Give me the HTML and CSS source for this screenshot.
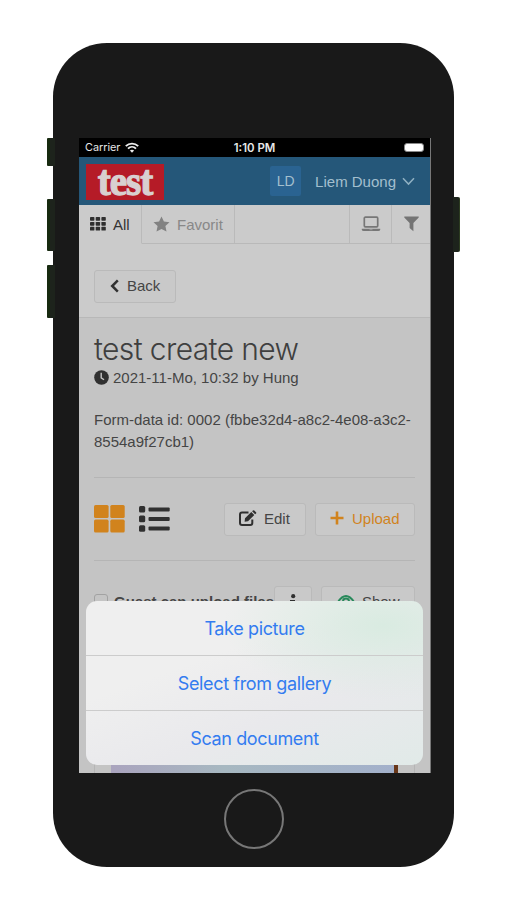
FILE: index.html
```html
<!DOCTYPE html>
<html lang="en">
<head>
    <meta charset="UTF-8">
    <meta name="viewport" content="width=device-width, initial-scale=1.0">
    <title>test create new</title>
    <link rel="stylesheet" href="styles.css">
</head>
<body>
    <div class="phone">
        <!-- Hardware buttons -->
        <span class="key mute"></span>
        <span class="key volume-up"></span>
        <span class="key volume-down"></span>
        <span class="key power"></span>

        <div class="screen">
            <div class="status-bar">
                <div class="carrier">
                    <span>Carrier</span>
                    <svg width="14" height="11" viewBox="0 0 14 11" fill="none" stroke="#eee" stroke-width="1.9">
                        <path d="M.8 4.2C4.3.7 9.7.7 13.2 4.2M3 6.6c2.3-2.3 5.7-2.3 8 0"/>
                        <path d="M7 10.8 4.9 8.6c1.2-1.1 3-1.1 4.2 0z" fill="#eee" stroke="none"/>
                    </svg>
                </div>
                <span class="time">1:10 PM</span>
                <span class="battery"></span>
            </div>

            <header class="header">
                <div class="logo"><span>test</span></div>
                <div class="avatar">LD</div>
                <span class="user">Liem Duong</span>
                <svg width="13" height="9" viewBox="0 0 13 9" fill="none" stroke="#8fb0c2" stroke-width="1.5"><path d="m1 1.3 5.5 5.8L12 1.3"/></svg>
            </header>

            <nav class="tabs">
                <div class="tab active">
                    <svg width="16" height="14" viewBox="0 0 16 14" fill="#2f2f2f">
                        <rect width="4.4" height="3.8" rx=".7"/><rect x="5.7" width="4.4" height="3.8" rx=".7"/><rect x="11.4" width="4.4" height="3.8" rx=".7"/>
                        <rect y="4.9" width="4.4" height="3.8" rx=".7"/><rect x="5.7" y="4.9" width="4.4" height="3.8" rx=".7"/><rect x="11.4" y="4.9" width="4.4" height="3.8" rx=".7"/>
                        <rect y="9.8" width="4.4" height="3.8" rx=".7"/><rect x="5.7" y="9.8" width="4.4" height="3.8" rx=".7"/><rect x="11.4" y="9.8" width="4.4" height="3.8" rx=".7"/>
                    </svg>
                    <span>All</span>
                </div>
                <div class="tab favorit">
                    <svg width="17" height="16" viewBox="0 0 17 16" fill="#828282"><path d="m8.5.4 2.4 5.1 5.6.7-4.1 3.9 1.1 5.5-5-2.7-5 2.7 1.1-5.5L.5 6.2l5.6-.7z"/></svg>
                    <span>Favorit</span>
                </div>
                <div class="tab spacer"></div>
                <div class="tab laptop">
                    <svg width="20" height="16" viewBox="0 0 20 16" fill="none" stroke="#777">
                        <rect x="3.3" y="1.2" width="13.4" height="9.6" rx="1" stroke-width="1.7"/>
                        <path d="M.8 12.8h18.4v.7q0 1.5-2 1.5H2.8q-2 0-2-1.5z" fill="#777" stroke="none"/>
                        <path d="M8.5 13.7h3" stroke="#aaa" stroke-width=".8"/>
                    </svg>
                </div>
                <div class="tab filter">
                    <svg width="15" height="16" viewBox="0 0 15 16" fill="#747474"><path d="M.5.5h14q.7.5 0 1.2L9.4 7v8.2L5.6 12V7L.5 1.7Q-.2 1 .5.5z"/></svg>
                </div>
            </nav>

            <div class="back-row">
                <button class="btn back">
                    <svg width="9" height="14" viewBox="0 0 9 14" fill="none" stroke="#303030" stroke-width="2.5"><path d="M7.8 1.4 2.2 7l5.6 5.6"/></svg>
                    <span>Back</span>
                </button>
            </div>

            <main class="content">
                <h1><span>test create new</span></h1>
                <div class="meta">
                    <svg width="15" height="15" viewBox="0 0 15 15"><circle cx="7.5" cy="7.5" r="7.3" fill="#303030"/><path d="M7.2 2.8v5l2.8 2" fill="none" stroke="#c5c5c5" stroke-width="1.4"/></svg>
                    <span>2021-11-Mo, 10:32 by Hung</span>
                </div>
                <p class="form-id"><span>Form-data id: 0002 (fbbe32d4-a8c2-4e08-a3c2-</span><br><span>8554a9f27cb1)</span></p>

                <div class="toolbar">
                    <svg width="31" height="28" viewBox="0 0 31 28" fill="#d1831d">
                        <rect width="14.6" height="13" rx="1.6"/><rect x="16.3" width="14.4" height="13" rx="1.6"/>
                        <rect y="14.6" width="14.6" height="13" rx="1.6"/><rect x="16.3" y="14.6" width="14.4" height="13" rx="1.6"/>
                    </svg>
                    <svg class="list-icon" width="31" height="26" viewBox="0 0 31 26" fill="#303030">
                        <rect width="6.2" height="6.6" rx="1.5"/><rect y="9.6" width="6.2" height="6.6" rx="1.5"/><rect y="19.2" width="6.2" height="6.6" rx="1.5"/>
                        <rect x="9.5" y="1.4" width="21.2" height="4" rx="1"/><rect x="9.5" y="11" width="21.2" height="4" rx="1"/><rect x="9.5" y="20.6" width="21.2" height="4" rx="1"/>
                    </svg>
                    <button class="btn edit">
                        <svg width="18" height="16" viewBox="0 0 18 16" fill="none">
                            <path d="M9.5 2.5H3Q1 2.5 1 4.5V13q0 2 2 2h8.3q2 0 2-2V9.5" stroke="#303030" stroke-width="2"/>
                            <path d="m6 8.3 6.3-6.2 3 3L9 11.3l-3.4.4zM13.1 1.3l.8-.8q.7-.6 1.4 0l1.7 1.7q.6.7 0 1.3l-.9.8z" fill="#303030"/>
                        </svg>
                        <span>Edit</span>
                    </button>
                    <button class="btn upload">
                        <svg width="14" height="14" viewBox="0 0 14 14" stroke="#d1831d" stroke-width="2.6"><path d="M7 .5v13M.5 7h13"/></svg>
                        <span>Upload</span>
                    </button>
                </div>

                <div class="guest-row">
                    <span class="checkbox"></span>
                    <b>Guest can upload files</b>
                    <button class="btn info">
                        <svg width="8" height="16" viewBox="0 0 8 16" fill="#303030"><circle cx="4.2" cy="2.2" r="2.1"/><path d="M1 6h5v8h1.5v2H.5v-2H2V8H1z"/></svg>
                    </button>
                    <button class="btn show">
                        <svg width="18" height="14" viewBox="0 0 18 14" fill="none" stroke="#27895a" stroke-width="2"><path d="M1 7q8-12 16 0-8 12-16 0z"/><circle cx="9" cy="6.5" r="3"/></svg>
                        <span>Show</span>
                    </button>
                </div>

                <div class="preview"><div class="photo"></div></div>
            </main>

            <!-- Action sheet -->
            <div class="sheet">
                <button>Take picture</button>
                <button>Select from gallery</button>
                <button>Scan document</button>
            </div>
        </div>

        <div class="home"></div>
    </div>
</body>
</html>
```

FILE: styles.css
```css
* {
    box-sizing: border-box;
}
body {
    margin: 0;
    height: 900px;
    padding: 43px 0 0 53px;
    overflow: hidden;
    background: white;
    color: #454545;
    font-family: "Liberation Sans", Arial, sans-serif;
    font-size: 15px;
}
svg {
    display: block;
    flex: none;
}
button {
    font: inherit;
    color: inherit;
}
span, b {
    white-space: nowrap;
}
.phone {
    position: relative;
    width: 401px;
    height: 824px;
    padding: 95px 0 0 26px;
    background: #191919;
    border-radius: 54px;
}
.key {
    position: absolute;
    left: -6px;
    width: 8px;
    background: #1d231c;
    border-left: 3px solid #172a10;
    border-radius: 1px 0 0 1px;
}
.mute { top: 95px; height: 28px; }
.volume-up { top: 156px; height: 52px; }
.volume-down { top: 222px; height: 53px; }
.power {
    top: 154px;
    left: 400px;
    width: 7px;
    height: 55px;
    border-left: 0;
    border-right: 1px solid #2c3b20;
    border-radius: 0 2px 2px 0;
}
.screen {
    position: relative;
    display: flex;
    flex-direction: column;
    width: 352px;
    height: 635px;
    overflow: hidden;
    background: #cbcbcb;
    border-right: 1px solid #777;
}

/* Status bar and header */
.status-bar {
    display: grid;
    grid-template-columns: 1fr auto 1fr;
    align-items: center;
    flex: none;
    height: 19px;
    margin-right: -1px;
    padding: 0 4px 0 6px;
    background: black;
    color: #e8e8e8;
    font-family: Inter, sans-serif;
    font-size: 10.8px;
}
.carrier {
    display: flex;
    align-items: center;
    gap: 5px;
}
.time {
    margin-right: 3px;
    font-size: 11.4px;
    font-weight: 600;
}
.battery {
    justify-self: end;
    width: 20px;
    height: 9px;
    margin-right: 3px;
    background: white;
    border: 1px solid #888;
    border-radius: 3px;
}
.header {
    display: flex;
    align-items: center;
    flex: none;
    height: 48px;
    margin-right: -1px;
    padding: 0 16px 0 7px;
    background: #255779;
    color: #a3bfce;
}
.logo {
    display: flex;
    align-items: center;
    justify-content: center;
    width: 78px;
    height: 36px;
    margin-top: 1px;
    background: #b51b27;
    color: #d8d0d0;
    font-family: "Liberation Serif", serif;
    font-size: 39px;
    font-weight: bold;
    line-height: 36px;
    -webkit-text-stroke: 1.2px #d8d0d0;
}
.logo span {
    margin-top: -2px;
    letter-spacing: -1px;
    transform: scaleY(1.1);
}
.avatar {
    width: 31px;
    height: 30px;
    margin: 0 14px 0 auto;
    background: #2a6391;
    border-radius: 2px;
    font-size: 14px;
    line-height: 31px;
    text-align: center;
}
.user {
    margin-right: 6px;
}

/* Tabs */
.tabs {
    display: flex;
    flex: none;
    height: 39px;
    color: #888;
}
.tab {
    display: flex;
    align-items: center;
    border-bottom: 1px solid #b9b9b9;
    border-right: 1px solid #bababa;
}
.active {
    width: 63px;
    padding-left: 11px;
    gap: 7px;
    border-bottom-color: transparent;
    color: #333;
}
.favorit {
    width: 93px;
    padding-left: 11px;
    gap: 7px;
}
.spacer {
    flex: 1;
}
.laptop, .filter {
    justify-content: center;
    width: 42px;
}
.filter {
    width: 38px;
    border-right: 0;
}

/* Buttons */
.btn {
    display: flex;
    align-items: center;
    height: 33px;
    padding: 0 0 2px;
    background: #c9c9c9;
    border: 1px solid #bababa;
    border-radius: 3px;
}
.back-row {
    flex: none;
    height: 74px;
    padding: 26px 0 0 15px;
    border-bottom: 1px solid #b8b8b8;
}
.back {
    width: 82px;
    padding-left: 15px;
    gap: 8px;
}

/* Content */
.content {
    flex: 1;
    padding: 13px 15px 0;
    background: #c4c4c4;
}
h1 {
    height: 36px;
    margin: 0;
    color: #3f3f3f;
    font-family: Inter, sans-serif;
    font-size: 30px;
    font-weight: 300;
    letter-spacing: -0.62px;
    line-height: 36px;
}
.meta {
    display: flex;
    align-items: center;
    height: 21px;
    gap: 4px;
}
.form-id {
    margin: 21px 0 0;
    line-height: 22px;
}
.toolbar {
    display: flex;
    align-items: center;
    height: 84px;
    margin-top: 24px;
    border-top: 1px solid #b5b5b5;
    border-bottom: 1px solid #b5b5b5;
}
.list-icon {
    margin-left: 14px;
}
.edit {
    width: 82px;
    margin-left: auto;
    padding-left: 14px;
    gap: 7px;
}
.upload {
    width: 100px;
    margin-left: 9px;
    padding-left: 14px;
    gap: 8px;
    color: #d1831d;
}
.guest-row {
    display: flex;
    align-items: center;
    height: 33px;
    margin-top: 25px;
}
.guest-row b {
    padding-bottom: 3px;
}
.checkbox {
    width: 14px;
    height: 14px;
    margin: 0 6px 4px 0;
    border: 1px solid #a2a2a2;
    border-radius: 3px;
}
.info {
    justify-content: center;
    width: 38px;
}
.show {
    width: 94px;
    margin-left: auto;
    padding-left: 15px;
    gap: 7px;
}
.preview {
    height: 160px;
    margin-top: 14px;
    padding: 0 16px;
    border: 1px solid #b5b5b5;
}
.photo {
    height: 158px;
    background: linear-gradient(90deg, #aaa4be, #a7b8c1 40%, #a3b1cb);
    border-right: 4px solid #683719;
}

/* Action sheet */
.sheet {
    position: absolute;
    top: 463px;
    left: 7px;
    width: 337px;
    height: 164px;
    overflow: hidden;
    border-radius: 11px;
    background:
        radial-gradient(ellipse at 88% 15%, #d9ebe1, transparent 38%),
        linear-gradient(160deg, #efefef 35%, #e9e9ec 65%, #e1eae8);
}
.sheet button {
    display: block;
    width: 100%;
    height: 55px;
    padding: 0;
    background: none;
    border: 0;
    border-bottom: 1px solid #cccccc;
    color: #337cf0;
    font-family: Inter, sans-serif;
    font-size: 18px;
    letter-spacing: -0.37px;
    line-height: 56px;
    text-align: center;
}
.sheet button:last-child {
    border-bottom: 0;
    line-height: 54px;
}
.home {
    width: 60px;
    height: 60px;
    margin: 16px 0 0 145px;
    border: 2px solid #777;
    border-radius: 50%;
}
```
